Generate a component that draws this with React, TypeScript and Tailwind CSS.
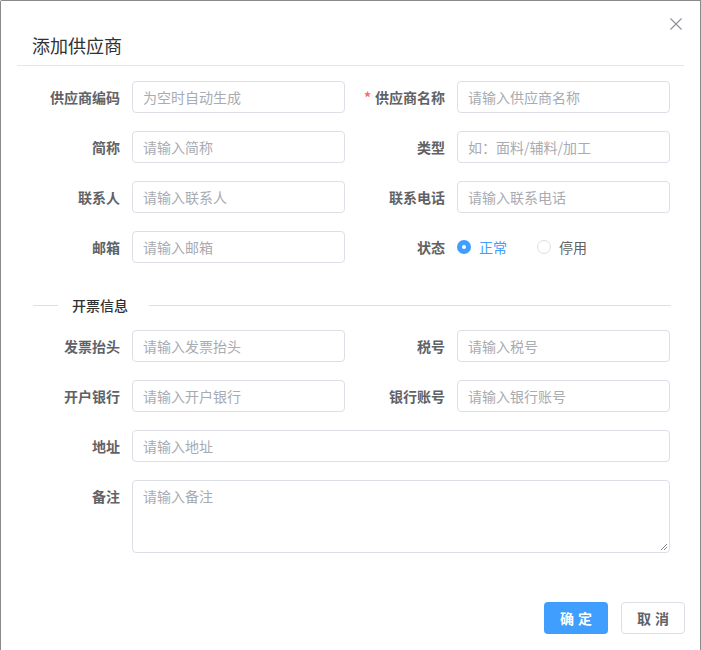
import React from "react";

const font = { fontFamily: '"Noto Sans CJK SC", "Noto Sans", sans-serif' };

function Input({ placeholder }: { placeholder: string }) {
  return (
    <div className="flex-1 h-[32px] border border-[#dcdfe6] rounded-[4px] flex items-center px-[10px] text-[14px] text-[#a8abb2] bg-white">
      {placeholder}
    </div>
  );
}

function Field({
  label,
  placeholder,
  required,
}: {
  label: string;
  placeholder: string;
  required?: boolean;
}) {
  return (
    <div className="flex items-center h-[32px]">
      <div className="w-[112px] pr-[12px] text-right text-[14px] font-bold text-[#606266] whitespace-nowrap">
        {required && <span className="text-[#f56c6c] mr-[4px]">*</span>}
        {label}
      </div>
      <Input placeholder={placeholder} />
    </div>
  );
}

export default function App() {
  return (
    <div className="w-[701px] h-[650px] bg-white overflow-hidden" style={font}>
      <div className="w-[701px] h-[650px] border-l border-t border-r border-[#8a8a8a] rounded-tl-[2px] relative">
        <div className="absolute right-[17px] top-[16px] w-[14px] h-[14px]">
          <svg viewBox="0 0 14 14" width="14" height="14">
            <path d="M1.5 1.5 L12.5 12.5 M12.5 1.5 L1.5 12.5" stroke="#909399" strokeWidth="1.2" fill="none" />
          </svg>
        </div>
        <div className="mx-[16px] pt-[32px] pb-[8px] border-b border-[#e4e7ed]">
          <div className="pl-[15px] h-[24px] leading-[24px] text-[18px] text-[#303133]">添加供应商</div>
        </div>
        <div className="pl-[19px] w-[670px] pt-[15px]">
          <div className="grid grid-cols-[325px_325px] gap-y-[18px]">
            <Field label="供应商编码" placeholder="为空时自动生成" />
            <Field label="供应商名称" placeholder="请输入供应商名称" required />
            <Field label="简称" placeholder="请输入简称" />
            <Field label="类型" placeholder="如：面料/辅料/加工" />
            <Field label="联系人" placeholder="请输入联系人" />
            <Field label="联系电话" placeholder="请输入联系电话" />
            <Field label="邮箱" placeholder="请输入邮箱" />
            <div className="flex items-center h-[32px]">
              <div className="w-[112px] pr-[12px] text-right text-[14px] font-bold text-[#606266]">状态</div>
              <div className="flex items-center">
                <span className="w-[14px] h-[14px] rounded-full bg-[#409eff] flex items-center justify-center">
                  <span className="w-[4px] h-[4px] rounded-full bg-white" />
                </span>
                <span className="ml-[8px] text-[14px] text-[#409eff]">正常</span>
                <span className="ml-[30px] w-[14px] h-[14px] rounded-full border border-[#dcdfe6] bg-white" />
                <span className="ml-[8px] text-[14px] text-[#606266]">停用</span>
              </div>
            </div>
          </div>
          <div className="flex items-center mt-[32px] h-[20px]">
            <div className="ml-[13px] w-[25px] h-px bg-[#dcdfe6]" />
            <div className="ml-[14px] mr-[21px] text-[14px] font-medium text-[#303133] leading-[20px]">开票信息</div>
            <div className="flex-1 h-px bg-[#dcdfe6]" />
          </div>
          <div className="grid grid-cols-[325px_325px] gap-y-[18px] mt-[15px]">
            <Field label="发票抬头" placeholder="请输入发票抬头" />
            <Field label="税号" placeholder="请输入税号" />
            <Field label="开户银行" placeholder="请输入开户银行" />
            <Field label="银行账号" placeholder="请输入银行账号" />
            <div className="col-span-2">
              <Field label="地址" placeholder="请输入地址" />
            </div>
            <div className="col-span-2 flex items-start">
              <div className="w-[112px] pr-[12px] text-right text-[14px] font-bold text-[#606266] leading-[32px]">备注</div>
              <div className="flex-1 h-[73px] border border-[#dcdfe6] rounded-[4px] px-[10px] pt-[5px] text-[14px] text-[#a8abb2] relative">
                请输入备注
                <svg className="absolute right-[1px] bottom-[1px]" width="8" height="8" viewBox="0 0 8 8">
                  <path d="M7 1 L1 7 M7 4 L4 7" stroke="#666" strokeWidth="0.8" />
                </svg>
              </div>
            </div>
          </div>
        </div>
        <div className="flex justify-end gap-[13px] pr-[15px] mt-[49px]">
          <div className="w-[64px] h-[32px] rounded-[4px] bg-[#409eff] text-white text-[14px] font-bold flex items-center justify-center tracking-[4px] pl-[4px]">
            确定
          </div>
          <div className="w-[64px] h-[32px] rounded-[4px] border border-[#dcdfe6] bg-white text-[#606266] text-[14px] font-bold flex items-center justify-center tracking-[4px] pl-[4px]">
            取消
          </div>
        </div>
      </div>
    </div>
  );
}
